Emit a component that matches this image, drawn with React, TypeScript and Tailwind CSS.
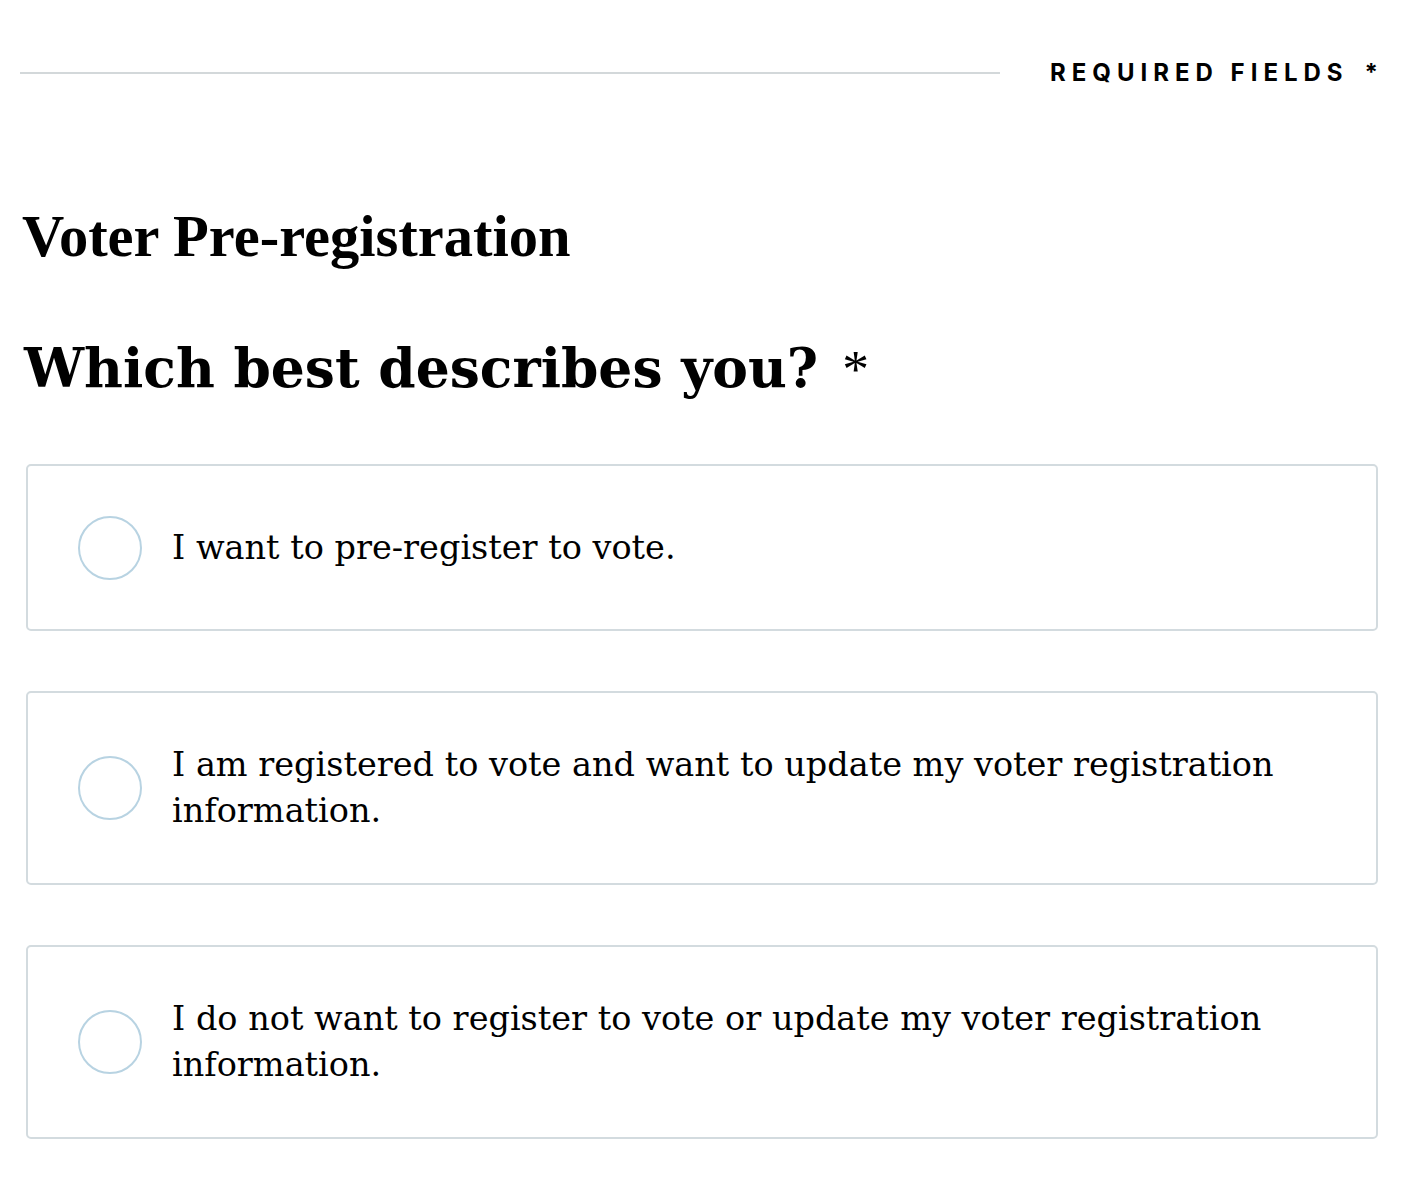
import React from 'react';

const options = [
  'I want to pre-register to vote.',
  'I am registered to vote and want to update my voter registration information.',
  'I do not want to register to vote or update my voter registration information.',
];

const App: React.FC = () => {
  return (
    <div className="w-[1404px] min-h-[1180px] bg-white text-black">
      {/* Required fields bar */}
      <div className="flex h-[36px] items-center pl-5 pr-[20px] mt-[55px]">
        <div className="h-[2px] w-[980px] bg-[#d3d8da]" />
        <div className="ml-auto flex items-center font-['Inter',sans-serif] text-[24px] font-bold tracking-[0.25em]">
          <span>REQUIRED FIELDS</span>
          <span className="ml-4">*</span>
        </div>
      </div>

      {/* Titles */}
      <h1 className="mt-[117px] pl-[22px] font-['Liberation_Serif',serif] text-[58.5px] font-bold leading-none">
        Voter Pre-registration
      </h1>
      <h2 className="mt-[75px] pl-6 font-['DejaVu_Serif',serif] text-[53.5px] font-bold leading-none">
        Which best describes you?
        <span className="ml-6 font-['Liberation_Serif',serif] font-normal">*</span>
      </h2>

      {/* Options */}
      <div className="mt-[68px] flex flex-col gap-[60px] px-[26px]">
        {options.map((text) => (
          <label
            key={text}
            className="flex min-h-[167px] items-center rounded-[5px] border-2 border-[#d3dbdf] py-[49px] pl-[50px] pr-[40px]"
          >
            <span className="h-[64px] w-[64px] shrink-0 rounded-full border-2 border-[#b8d3e2]" />
            <span className="ml-[30px] font-['DejaVu_Serif',serif] text-[33.5px] leading-[46px]">
              {text}
            </span>
          </label>
        ))}
      </div>
    </div>
  );
};

export default App;
